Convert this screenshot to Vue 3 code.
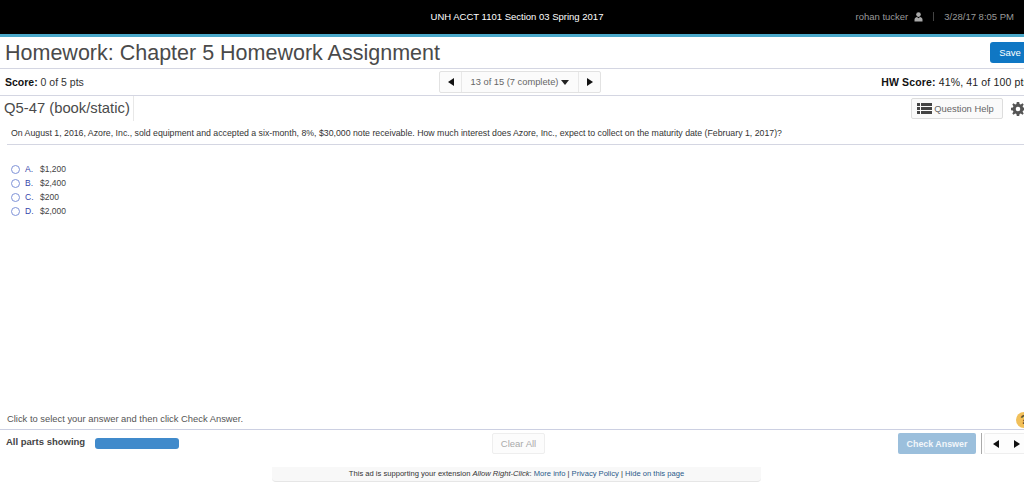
<script setup>
const options = [
  { key: 'A.', value: '$1,200' },
  { key: 'B.', value: '$2,400' },
  { key: 'C.', value: '$200' },
  { key: 'D.', value: '$2,000' },
]
</script>

<template>
  <div class="page">
    <header class="topbar">
      <div class="course">UNH ACCT 1101 Section 03 Spring 2017</div>
      <div class="user">
        <span>rohan tucker</span>
        <svg class="person" width="9" height="10" viewBox="0 0 9 10"><circle cx="4.5" cy="2.6" r="2.3" fill="#aaa"/><path d="M0.5 9.5V7.4C0.5 6 2 5.3 3 5.1L4.5 6.2 6 5.1C7 5.3 8.500 6 8.500 7.4V9.500Z" fill="#aaa"/></svg>
        <span class="pipe"></span>
        <span>3/28/17 8:05 PM</span>
      </div>
    </header>

    <section class="title-row">
      <h1>Homework: Chapter 5 Homework Assignment</h1>
      <button class="save">Save</button>
    </section>

    <section class="score-row">
      <div class="score"><b>Score:</b> 0 of 5 pts</div>
      <div class="pager">
        <span class="pager-btn"><i class="tri left"></i></span>
        <span class="pager-label">13 of 15 (7 complete)<i class="tri down"></i></span>
        <span class="pager-btn next"><i class="tri right"></i></span>
      </div>
      <div class="hw"><b>HW Score:</b> 41%, 41 of 100 pts</div>
    </section>

    <section class="q-row">
      <div class="q-title">Q5-47 (book/static)</div>
      <div class="q-tools">
        <button class="help">
          <svg width="15" height="11" viewBox="0 0 15 11"><path d="M0 0h3v3H0zM4 0h11v3H4zM0 4h3v3H0zM4 4h11v3H4zM0 8h3v3H0zM4 8h11v3H4z" fill="#444"/></svg>
          Question Help
        </button>
        <svg class="gear" width="14" height="14" viewBox="0 0 14 14"><path d="M5.800 0h2.400l.4 1.900 1.200.5L11.500 1.300l1.200 1.200-1.100 1.700.5 1.200 1.900.4v2.400l-1.900.4-.5 1.200 1.100 1.700-1.200 1.200-1.700-1.100-1.200.5L8.200 14H5.800l-.4-1.900-1.200-.5-1.700 1.100-1.200-1.200 1.100-1.700-.5-1.200L0 8.200V5.800l1.900-.4.500-1.200L1.300 2.500l1.200-1.200 1.700 1.100 1.200-.5ZM7 4.700A2.300 2.300 0 1 0 7 9.300 2.300 2.300 0 0 0 7 4.700Z" fill="#555" fill-rule="evenodd"/></svg>
      </div>
    </section>

    <p class="question">On August 1, 2016, Azore, Inc., sold equipment and accepted a six-month, 8%, $30,000 note receivable. How much interest does Azore, Inc., expect to collect on the maturity date (February 1, 2017)?</p>

    <ul class="options">
      <li v-for="o in options" :key="o.key">
        <span class="radio"></span>
        <span class="opt-key">{{ o.key }}</span>
        <span class="opt-val">{{ o.value }}</span>
      </li>
    </ul>

    <div class="spacer"></div>

    <div class="hint-row">
      <span class="hint-text">Click to select your answer and then click Check Answer.</span>
      <span class="hint-icon">?</span>
    </div>

    <footer class="foot">
      <b class="parts">All parts showing</b>
      <span class="progress"></span>
      <button class="clear">Clear All</button>
      <button class="check">Check Answer</button>
      <span class="divider"></span>
      <div class="foot-nav">
        <span><i class="tri left"></i></span>
        <span><i class="tri right"></i></span>
      </div>
    </footer>

    <div class="ad-wrap">
      <div class="ad">This ad is supporting your extension <em>Allow Right-Click</em>: <a>More info</a> | <a>Privacy Policy</a> | <a>Hide on this page</a></div>
    </div>
  </div>
</template>

<style>
html, body { margin: 0; background: #fff; }
</style>

<style scoped>
.page { width: 1024px; height: 495px; overflow: hidden; display: flex; flex-direction: column; font-family: "Liberation Sans", Arial, sans-serif; color: #333; background: #fff; }
.topbar { height: 34px; flex: none; background: #000; border-bottom: 3px solid #4aa8c9; display: flex; align-items: center; position: relative; font-size: 9.500px; color: #fff; }
.course { width: 100%; text-align: center; margin-top: -1px; padding-left: 10px; box-sizing: border-box; }
.user { position: absolute; right: 10px; top: 11px; display: flex; align-items: center; color: #999; line-height: 11px; }
.person { margin: 0 0 0 6px; }
.pipe { width: 1px; height: 9px; background: #444; margin: 0 10px 0 10px; }
.title-row { height: 31px; flex: none; display: flex; align-items: center; justify-content: space-between; border-bottom: 1px solid #d4d6e2; }
h1 { margin: 0 0 0 5px; font-size: 21.500px; font-weight: 400; color: #4a4a4a; line-height: 30px; white-space: nowrap; }
.save { width: 42px; height: 21px; flex: none; margin-right: -8px; padding: 0 2px 0 0; background: #0f77c4; color: #fff; border: 0; border-radius: 3px 0 0 3px; font: 9.500px "Liberation Sans", sans-serif; }
.score-row { height: 26px; flex: none; display: grid; grid-template-columns: 439px auto 1fr; align-items: center; border-bottom: 1px solid #d4d6e2; font-size: 10.500px; }
.score { padding-left: 5px; color: #333; }
.score b, .hw b { color: #111; }
.hw { justify-self: end; margin-right: -5px; color: #222; white-space: nowrap; letter-spacing: .15px; }
.pager { display: flex; height: 20px; border: 1px solid #e2e2e2; border-radius: 2px; background: #fbfbfb; font-size: 9.300px; color: #666; align-items: stretch; }
.pager-btn { width: 21px; display: flex; align-items: center; justify-content: center; border-right: 1px solid #e8e8e8; }
.pager-btn.next { border-right: 0; border-left: 1px solid #e8e8e8; }
.pager-label { width: 116px; display: flex; align-items: center; justify-content: center; }
.tri { display: inline-block; width: 0; height: 0; border-style: solid; border-color: transparent; }
.tri.left { border-width: 4px 6px 4px 0; border-right-color: #111; }
.tri.right { border-width: 4px 0 4px 6px; border-left-color: #111; }
.tri.down { border-width: 5px 4px 0; border-top-color: #222; margin-left: 3px; }
.q-row { height: 25px; flex: none; display: flex; justify-content: space-between; align-items: flex-start; }
.q-title { height: 25px; padding: 0 3px 0 4px; border-right: 1px solid #e8e8e8; font-size: 14.800px; line-height: 24px; color: #4a4a4a; white-space: nowrap; }
.q-tools { display: flex; align-items: center; margin-top: 2px; margin-right: -1px; }
.help { width: 92px; height: 21px; padding: 0 3px 0 0; display: flex; align-items: center; justify-content: center; gap: 2px; background: #fafafa; border: 1px solid #ddd; border-radius: 2px; color: #666; font: 9.400px "Liberation Sans", sans-serif; }
.gear { margin-left: 8px; }
.question { margin: 0 0 0 7px; padding: 5px 0 4px 4px; height: 14px; line-height: 14px; font-size: 8.750px; color: #333; border-bottom: 1px solid #d4d6e2; white-space: nowrap; }
.options { list-style: none; margin: 17px 0 0 11px; padding: 0; }
.options li { height: 14px; display: flex; align-items: center; font-size: 8.500px; color: #444; }
.radio { width: 7px; height: 7px; border: 1.200px solid #7f93d8; border-radius: 50%; margin-right: 5px; background: #fff; flex: none; }
.opt-key { width: 15px; color: #3344aa; }
.spacer { flex: 1; }
.hint-row { height: 18px; flex: none; display: flex; justify-content: space-between; align-items: flex-start; padding-left: 7px; box-sizing: content-box; border-bottom: 1px solid #ccd0e2; font-size: 9.400px; color: #555; }
.hint-text { line-height: 15px; white-space: nowrap; }
.hint-icon { width: 16px; height: 16px; margin-right: -8px; margin-top: 1px; border-radius: 50%; background: #f1c05a; color: #553; font: bold 12px/16px "Liberation Sans", sans-serif; text-align: center; flex: none; }
.foot { height: 37px; flex: none; display: flex; align-items: flex-start; padding-top: 3px; box-sizing: border-box; }
.foot > * { flex: none; }
.parts { margin: 3px 0 0 6px; width: 89px; font-size: 9.500px; color: #444; }
.progress { width: 84px; height: 11px; margin-top: 5px; background: #408acb; border-radius: 3px; }
.clear { width: 53px; height: 21px; margin-left: 313px; padding: 0; background: #fcfcfc; color: #aaa; border: 1px solid #eee; border-radius: 2px; font: 9.500px "Liberation Sans", sans-serif; }
.check { width: 78px; height: 21px; margin-left: 353px; padding: 0; background: #9bbfdc; color: #f2f6fa; border: 0; border-radius: 2px; font: bold 8.900px "Liberation Sans", sans-serif; }
.divider { width: 1px; height: 21px; margin-left: 5px; background: #aaa; }
.foot-nav { display: flex; width: 44px; height: 21px; margin-left: 2px; background: #fdfdfd; border: 1px solid #eee; border-right: 0; border-radius: 2px 0 0 2px; box-sizing: border-box; }
.foot-nav span { width: 22px; display: flex; align-items: center; justify-content: center; }
.ad-wrap { height: 28px; flex: none; display: flex; justify-content: center; align-items: flex-start; padding-left: 9px; }
.ad { width: 489px; height: 15px; box-sizing: border-box; background: #f8f8f8; border-bottom: 1px solid #e6e6e6; border-radius: 0 0 4px 4px; text-align: center; font-size: 7.600px; line-height: 14px; color: #333; white-space: nowrap; }
.ad a { color: #2a5a8a; }
</style>
